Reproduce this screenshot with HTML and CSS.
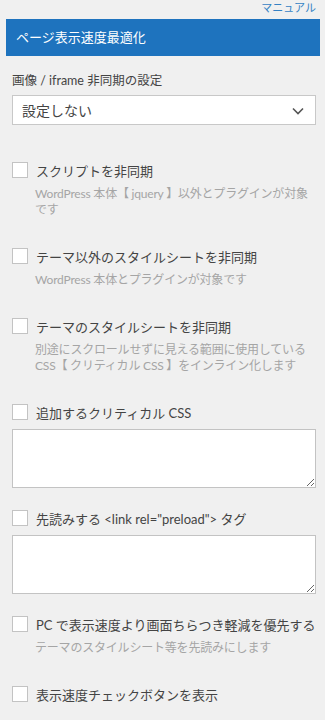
FILE: index.html
```html
<!DOCTYPE html>
<html lang="ja">
  <head>
    <meta charset="UTF-8" />
    <meta name="viewport" content="width=device-width, initial-scale=1.0" />
    <title>ページ表示速度最適化</title>
    <link rel="stylesheet" href="styles.css">
  </head>
  <body>
    <div class="panel">
      <div class="manual-row">
        <a href="#" class="manual-link">マニュアル</a>
      </div>

      <h2 class="panel-title">ページ表示速度最適化</h2>

      <div class="settings">
        <div class="select-group">
          <label class="select-label">画像 / iframe 非同期の設定</label>
          <div class="select-wrap">
            <select>
              <option>設定しない</option>
            </select>
            <svg class="select-arrow" width="12" height="8" viewBox="0 0 12 8">
              <path d="M1 1.5 L6 6.5 L11 1.5" fill="none" stroke="#555" stroke-width="1.6" />
            </svg>
          </div>
        </div>

        <div class="option">
          <label class="check-row">
            <input type="checkbox" />
            <span>スクリプトを非同期</span>
          </label>
          <p class="desc">WordPress 本体【 jquery 】以外とプラグインが対象です</p>
        </div>

        <div class="option">
          <label class="check-row">
            <input type="checkbox" />
            <span>テーマ以外のスタイルシートを非同期</span>
          </label>
          <p class="desc">WordPress 本体とプラグインが対象です</p>
        </div>

        <div class="option">
          <label class="check-row">
            <input type="checkbox" />
            <span>テーマのスタイルシートを非同期</span>
          </label>
          <p class="desc">別途にスクロールせずに見える範囲に使用している CSS【 クリティカル CSS 】をインライン化します</p>
        </div>

        <div class="option option-text">
          <label class="check-row">
            <input type="checkbox" />
            <span>追加するクリティカル CSS</span>
          </label>
          <textarea></textarea>
        </div>

        <div class="option option-text">
          <label class="check-row">
            <input type="checkbox" />
            <span>先読みする &lt;link rel="preload"&gt; タグ</span>
          </label>
          <textarea></textarea>
        </div>

        <div class="option">
          <label class="check-row">
            <input type="checkbox" />
            <span>PC で表示速度より画面ちらつき軽減を優先する</span>
          </label>
          <p class="desc">テーマのスタイルシート等を先読みにします</p>
        </div>

        <div class="option">
          <label class="check-row">
            <input type="checkbox" />
            <span>表示速度チェックボタンを表示</span>
          </label>
        </div>
      </div>
    </div>
  </body>
</html>
```

FILE: styles.css
```css
* {
  margin: 0;
  padding: 0;
  box-sizing: border-box;
  font-family: Lato, "Noto Sans CJK JP", sans-serif;
}

body {
  background-color: #f0f0f0;
  color: #444;
  min-height: 100vh;
}

.panel {
  padding: 0 5px 0 6px;
}

.manual-row {
  display: flex;
  justify-content: flex-end;
  height: 19px;
  padding-right: 4px;
}

.manual-link {
  color: #3582c4;
  font-size: 11px;
  line-height: 19px;
  text-decoration: none;
  margin-top: -2px;
}

.panel-title {
  background-color: #1e73be;
  color: white;
  font-size: 13px;
  font-weight: normal;
  height: 37px;
  line-height: 37px;
  padding-left: 10px;
}

.settings {
  padding: 0 4px 0 6px;
}

.select-group {
  margin-top: 17px;
  margin-bottom: 35px;
}

.select-label {
  display: block;
  font-size: 12.5px;
  line-height: 16px;
  color: #444;
  margin-bottom: 6px;
}

.select-wrap {
  position: relative;
}

.select-wrap select {
  width: 100%;
  height: 30px;
  appearance: none;
  -webkit-appearance: none;
  background-color: #fff;
  border: 1px solid #c8c8c8;
  border-radius: 0;
  padding: 0 30px 0 9px;
  font-size: 14px;
  color: #444;
  outline: none;
}

.select-arrow {
  position: absolute;
  right: 12px;
  top: 12px;
  pointer-events: none;
}

.option {
  margin-bottom: 28px;
}

.option-text {
  margin-bottom: 20px;
}

.check-row {
  display: flex;
  align-items: center;
  gap: 8px;
  height: 20px;
  font-size: 13px;
  color: #444;
  cursor: pointer;
}

.check-row input[type="checkbox"] {
  appearance: none;
  -webkit-appearance: none;
  width: 16px;
  height: 16px;
  flex-shrink: 0;
  background-color: #fff;
  border: 1px solid #c3c3c3;
  margin: 0;
}

.desc {
  margin-top: 6px;
  padding-left: 23px;
  font-size: 12px;
  letter-spacing: -0.2px;
  line-height: 16px;
  color: #a5a5a5;
}

textarea {
  display: block;
  width: 100%;
  height: 59px;
  margin-top: 7px;
  background-color: #fff;
  border: 1px solid #c3c3c3;
  border-radius: 0;
  outline: none;
}
```
